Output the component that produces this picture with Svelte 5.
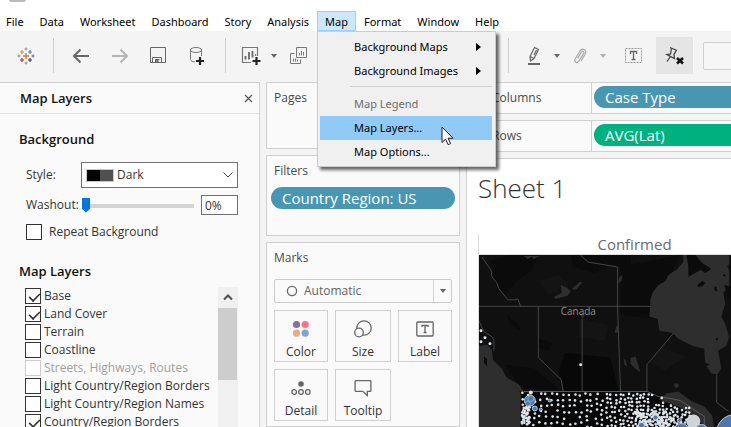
<script>
  const menusBefore = ['File', 'Data', 'Worksheet', 'Dashboard', 'Story', 'Analysis'];
  const menusAfter = ['Format', 'Window', 'Help'];

  let style = $state('Dark');
  let washout = $state(0);
  let mark = $state('Automatic');
  let repeat = $state(false);
  let layers = $state([
    { name: 'Base', on: true },
    { name: 'Land Cover', on: true },
    { name: 'Terrain', on: false },
    { name: 'Coastline', on: false },
    { name: 'Streets, Highways, Routes', on: false, disabled: true },
    { name: 'Light Country/Region Borders', on: false },
    { name: 'Light Country/Region Names', on: false },
    { name: 'Country/Region Borders', on: true }
  ]);

  // Seeded generator so the county marks keep their places between renders.
  let seed = 11;
  function rnd() {
    seed = (seed * 16807) % 2147483647;
    return seed / 2147483647;
  }

  // Lower edge of the northern border: flat, then falling along the lakes.
  function northEdge(x) {
    if (x < 172) return 139;
    return 139 + (x - 172) * 0.36;
  }

  function countyMarks() {
    const out = [];
    let x = 44;
    while (x < 214) {
      const t = Math.max(0, (x - 95) / 60);
      const step = Math.max(3.8, 5.8 - t * 2);
      for (let y = northEdge(x) + rnd() * 2; y < 176; y += step) {
        if (x < 130 && rnd() < 0.12) continue;
        if (x > 172 && y < 152 && rnd() < 0.6) continue;
        out.push({ x: x + (rnd() - 0.5) * 2.4, y: y + (rnd() - 0.5) * 1.6 });
      }
      x += step;
    }
    for (let i = 0; i < 34; i++) out.push({ x: 43 + rnd() * 9, y: 152 + rnd() * 20 });
    for (let i = 0; i < 110; i++) out.push({ x: 155 + rnd() * 42, y: 156 + rnd() * 20 });
    return out;
  }
  const marks = countyMarks();

  const logo = [
    [9, 9, 3, '#e8762d', 1.3], [5, 5, 2, '#eb912c', 1.2], [13, 5, 2, '#59879b', 1.2],
    [5, 13, 2, '#c72035', 1.2], [13, 13, 2, '#1f447e', 1.2], [9, 2, 1.5, '#7199a6', 1],
    [9, 16, 1.5, '#7199a6', 1], [2, 9, 1.5, '#7199a6', 1], [16, 9, 1.5, '#5b6591', 1]
  ];
</script>

<div class="app">
  <div class="titlebar"><span></span></div>
  <nav class="menubar">
    {#each menusBefore as m}<button class="menu">{m}</button>{/each}
    <div class="open">
      <button class="menu active">Map</button>
      <div class="dropdown" role="menu">
        <button role="menuitem">Background Maps <i class="sub"></i></button>
        <button role="menuitem">Background Images <i class="sub"></i></button>
        <hr />
        <button role="menuitem" disabled>Map Legend</button>
        <button role="menuitem" class="hover">Map Layers...</button>
        <button role="menuitem">Map Options...</button>
        <svg class="cursor" width="13" height="20" viewBox="0 0 13 20"><path d="M1 1v15.500l3.600-3.400 2.600 5.600 2.400-1.100-2.500-5.400h4.900z" fill="#fff" stroke="#1a1a2a" stroke-width="1" /></svg>
      </div>
    </div>
    {#each menusAfter as m}<button class="menu">{m}</button>{/each}
  </nav>

  <div class="toolbar">
    <button class="tool" aria-label="Start page">
      <svg width="18" height="18" viewBox="0 0 18 18">
        {#each logo as [x, y, r, c, w]}<path d="M{x - r} {y}h{r * 2}M{x} {y - r}v{r * 2}" stroke={c} stroke-width={w} />{/each}
      </svg>
    </button>
    <i class="rule"></i>
    <button class="tool" aria-label="Undo"><svg width="18" height="16" viewBox="0 0 18 16"><path d="M17 8H2M8.500 1.500L2 8l6.500 6.500" fill="none" stroke="#666" stroke-width="2" /></svg></button>
    <button class="tool" aria-label="Redo"><svg width="18" height="16" viewBox="0 0 18 16"><path d="M1 8h15M9.500 1.500L16 8l-6.500 6.500" fill="none" stroke="#b4b4b4" stroke-width="2" /></svg></button>
    <button class="tool" aria-label="Save"><svg width="17" height="17" viewBox="0 0 17 17" fill="none" stroke="#666"><path d="M.5.5h15v15H.5zM2.500 15.500v-5h9v5M5.500 15.500v-3h4" /><path d="M5.500 12.500h2.500v3H5.500z" fill="#777" /></svg></button>
    <button class="tool" aria-label="New data source"><svg width="18" height="20" viewBox="0 0 18 20" fill="none" stroke="#777"><ellipse cx="7" cy="4" rx="5.500" ry="2.500" /><path d="M1.500 4v9.500c0 1.300 2 2.300 4.500 2.500M12.500 4v6" /><path d="M11 11v8M7 15h8" stroke="#222" stroke-width="2.200" /></svg></button>
    <i class="rule"></i>
    <button class="tool narrow" aria-label="New worksheet"><svg width="20" height="20" viewBox="0 0 20 20" fill="none" stroke="#777"><path d="M10 16.500H1.500v-15h15V10M14.500 10V8" stroke-width="1.200" /><path d="M8 13.500V6M11.500 11.500V5M4.500 13.500V10" stroke="#666" stroke-width="1.800" /><path d="M15.500 11v8M11.500 15h8" stroke="#222" stroke-width="2.200" /></svg></button>
    <button class="caret" aria-label="Worksheet options"></button>
    <button class="tool" aria-label="Duplicate"><svg width="18" height="18" viewBox="0 0 18 18" fill="none" stroke="#777"><path d="M6.500.5h10v10h-10zM4.500 6.500h-4v10h10v-4M9.500 8.500V6M11.500 8.500V4M13.500 8.500V5M3.500 14.500v-3M5.500 14.500v-3M7.500 14.500v-2" /></svg></button>
    <div class="right-tools">
      <i class="rule"></i>
      <button class="tool narrow" aria-label="Highlight"><svg width="15" height="20" viewBox="0 0 15 20" fill="none" stroke="#666"><path d="M3 10.500L7.500 1.500l4 2L7 12.500l-3.500 2.500zM3 10.500l4 2M7 9l2.500-5" stroke-width="1.200" /><path d="M1 18h12" stroke-width="2" /></svg></button>
      <button class="caret" aria-label="Highlight options"></button>
      <button class="tool narrow" aria-label="Group"><svg width="15" height="18" viewBox="0 0 15 18" fill="none" stroke="#a8a8a8" stroke-width="1.200"><path d="M4.500 11.500l4-6.500c1-1.600 3.100-.4 2.200 1.200L6 14c-1.800 2.900-5.500.8-3.800-2L7 4C9.300.2 14.500 3 12.200 7L8 14" /></svg></button>
      <button class="caret pale" aria-label="Group options"></button>
      <button class="tool label-tool" aria-label="Show mark labels"><svg width="18" height="16" viewBox="0 0 18 16" fill="none"><path d="M.5.5h16v14H.5z" stroke="#999" stroke-dasharray="2 1" /><path d="M5.500 6V3.500h6V6M8.500 3.500v8M6.500 11.500h4" stroke="#666" stroke-width="1.300" /></svg></button>
      <button class="tool pin" aria-label="Fix map"><svg width="20" height="20" viewBox="0 0 20 20" fill="none"><path d="M5 1.500l7 3M6.500 2L5.500 8 2 8.500l7.500 4L9 8.500l2.500-4.500M5.500 10.500L2 15.500" stroke="#444" stroke-width="1.300" /><path d="M12 12l6 5.500M18 12l-6 5.500" stroke="#111" stroke-width="2.500" /></svg></button>
      <input class="fit" aria-label="Fit" />
    </div>
  </div>

  <div class="workspace">
    <aside class="pane">
      <header><h2>Map Layers</h2><button class="close" aria-label="Close"><svg width="9" height="9" viewBox="0 0 9 9"><path d="M1 1l7 7M8 1L1 8" stroke="#555" stroke-width="1.200" /></svg></button></header>
      <h3>Background</h3>
      <div class="form">
        <div class="row style-row">
          <label for="style">Style:</label>
          <div class="style-box">
            <svg class="swatch" width="28" height="13" viewBox="0 0 28 13"><path d="M0 0h28v13H0z" fill="#c8c8c8" /><path d="M1 1h13v11H1z" fill="#050505" /><path d="M14 1h13v11H14z" fill="#505050" /></svg>
            <select id="style" bind:value={style}><option>Dark</option><option>Light</option><option>Normal</option></select>
            <svg class="chev" width="10" height="6" viewBox="0 0 10 6"><path d="M.5.500L5 5 9.500.500" fill="none" stroke="#444" /></svg>
          </div>
        </div>
        <div class="row washout">
          <label for="washout">Washout:</label>
          <input id="washout" type="range" min="0" max="100" bind:value={washout} />
          <input class="percent" aria-label="Washout percent" value="{washout}%" />
        </div>
        <label class="check repeat"><input type="checkbox" bind:checked={repeat} />Repeat Background</label>
      </div>
      <h3 class="second">Map Layers</h3>
      <div class="layers">
        <div class="list">
          {#each layers as l}
            <label class="check" class:off={l.disabled}><input type="checkbox" bind:checked={l.on} disabled={l.disabled} />{l.name}</label>
          {/each}
        </div>
        <div class="scroll">
          <svg width="10" height="7" viewBox="0 0 10 7"><path d="M1 5.500l4-4 4 4" fill="none" stroke="#505050" stroke-width="2" /></svg>
          <div></div>
        </div>
      </div>
    </aside>

    <div class="cards">
      <section class="card pages"><h4>Pages</h4></section>
      <section class="card filters"><h4>Filters</h4><div class="pill">Country Region: US</div></section>
      <section class="card marks">
        <h4>Marks</h4>
        <div class="mark-type">
          <svg width="12" height="12" viewBox="0 0 12 12"><circle cx="6" cy="6" r="4.600" fill="none" stroke="#666" stroke-width="1.300" /></svg>
          <select aria-label="Mark type" bind:value={mark}><option>Automatic</option><option>Circle</option><option>Map</option></select>
          <span><i class="tri"></i></span>
        </div>
        <div class="grid">
          <button><svg width="18" height="18" viewBox="0 0 18 18"><circle cx="4.500" cy="4.500" r="3.600" fill="#85709b" /><circle cx="13.200" cy="4.500" r="3.600" fill="#fc7183" /><circle cx="4.500" cy="13.200" r="3.600" fill="#f3a77e" /><circle cx="13.200" cy="13.200" r="3.600" fill="#7ea6d0" /></svg>Color</button>
          <button><svg width="18" height="18" viewBox="0 0 18 18" fill="#fafafa" stroke="#666" stroke-width="1.300"><circle cx="10" cy="8" r="7.200" /><circle cx="5" cy="12.500" r="4.300" /></svg>Size</button>
          <button><svg width="18" height="18" viewBox="0 0 18 18" fill="none" stroke="#666" stroke-width="1.300"><rect x=".8" y="2" width="16.400" height="14" rx="1" /><path d="M6 7V5.500h6V7M9 5.500v7M7.500 12.500h3" /></svg>Label</button>
          <button><svg width="20" height="18" viewBox="0 0 20 18" fill="none" stroke="#666" stroke-width="1.300"><circle cx="10" cy="5" r="2.800" fill="#666" stroke="none" /><circle cx="3.200" cy="13" r="2.300" /><circle cx="10" cy="13" r="2.300" /><circle cx="16.800" cy="13" r="2.300" /></svg>Detail</button>
          <button><svg width="18" height="18" viewBox="0 0 18 18" fill="none" stroke="#666" stroke-width="1.300"><path d="M1.700 1.700h14.600q.6 0 .6.600v9.400q0 .6-.6.600h-3V16.500l-4.600-4.200h-7q-.6 0-.6-.6V2.300q0-.6.600-.6z" /></svg>Tooltip</button>
        </div>
      </section>
    </div>

    <main>
      <div class="shelf"><span>Columns</span><div class="drop"><div class="pill">Case Type</div></div></div>
      <div class="shelf"><span>Rows</span><div class="drop"><div class="pill green">AVG(Lat)</div></div></div>
      <div class="sheet">
        <h1>Sheet 1</h1>
        <div class="view">
          <div class="col-head">Confirmed</div>
          <svg class="map" viewBox="0 0 312 212">
            <rect width="312" height="212" fill="#101010" />
            <g fill="#0b0b0b">
              <path d="M12 6l18-6h30l-8 16-14 10-12 14-10-14z" /><path d="M92 0h60v14l-20-4-16 8-22-6z" /><path d="M142 12l60-12-16 34-10 30-34-4z" />
              <path d="M28 60l12 10 2 6-12-8zM60 84l14 4-4 8-12-3z" /><path d="M26 110l30 4 26 22-40-2z" />
            </g>
            <path d="M86 98l46 5 8 34H86l-6-20z" fill="#080808" />
            <path d="M41 137h130l14 4 20 10 14 20v6H41z" fill="#080808" />
            <g fill="#141414"><path d="M60 26l20-6 10 12-20 8zM100 64l30 6-4 16-26-4zM182 92l26 10-22 14-14-8z" /></g>
            <g fill="#2e2e2e">
              <path d="M205 0v7l-6 7-9 6-3 6-7 4-6 8-2 7-1 17 8 2 2 12 13 2 6 6 14 7 12 3 1 15 6 10 6 1 4-6-3-18 8-5 3-9-4-13-4-7 4-13-2-12 6-3V0z" />
              <path d="M75 42l8-4-1-8 5 2 5 4-3 5-12 3zM94 33l7-6 3 0-6 7-4 1zM139 28l2-6 3-2-1 6zM45 1h16l-6 3-2-2-4 2zM136 78l2-7 2-1-1 8z" />
              <path d="M0 91l8-1 5 5 1 10 9 9 4 8 10 10 5 7-1 75H0z" />
              <path d="M28 123l12 7 5 7-4 0-10-9z" />
              <path d="M152 103l5-1 5 16-5-4-5-5zM145 104l2 1 2 7-3-2z" /><path d="M180 145l8-6 12-2 12 9 14 6 8 9 2 14-8 2-8-14-18-10z" /><path d="M101 60l6-2-3 6z" /><circle cx="198" cy="131" r="2.300" />
            </g>
            <g fill="#0b0b0b"><path d="M208 0l2 11v11l5-3 7-4 5 3 6-4-9-6-7-8zM219 30l5-4 3 2-3 3-4 1zM236 33l2-2 1 5-2 0zM244 20l3-1v3zM249 11l4-2v10zM237 84l3-1-1 3zM246 30l7 2v12l-4-3zM227 108l5 2-5 1zM5 102l3 2 0 8-3-4z" /></g>
            <g fill="none" stroke="#444">
              <path d="M3 2l6 9 3 4 1 7 5 6 2 6 9 11 7 0 3-1 3 8" /><path d="M0 51.500h172M59.500 52v51l23 22 2 12M103.500 64v73M102 0l7 7 30 5V52l3 85M168.500 137v-27l27-32M238.500 120v28l12 9" /><path d="M0 66l5 11 8 5 2 4v10" /><path d="M45 137h124l11 5 12 2 10 2 12 8 12 8v12" stroke="#5c5c5c" />
            </g>
            <text x="82" y="60" fill="#8e8e8e">Canada</text>
            <g fill="#dfe4ea">
              {#each marks as m}<circle cx={m.x} cy={m.y} r="1.300" />{/each}
              <circle cx="2" cy="76" r="1.500" /><circle cx="6" cy="83" r="1.500" /><circle cx="2" cy="87" r="1.500" /><circle cx="11" cy="89" r="1.500" /><circle cx="102" cy="110" r="1.500" /><circle cx="52" cy="138" r="2" /><circle cx="215" cy="167" r="7" fill="#cfd4da" />
            </g>
            <g fill="#4e79a7" stroke="#dfe6ee" stroke-width=".800">
              <circle cx="51" cy="146" r="5.500" /><circle cx="52" cy="144" r="3" stroke="#9db8d3" /><circle cx="49" cy="149" r="2.500" stroke="#9db8d3" /><circle cx="56" cy="154" r="2.500" /><circle cx="62" cy="155" r="1.500" /><circle cx="71" cy="146" r="1.500" />
              <circle cx="177" cy="163" r="2.500" /><circle cx="163" cy="171" r="3" /><circle cx="201" cy="166" r="2" /><circle cx="203" cy="177" r="8" /><circle cx="223" cy="177" r="7" /><circle cx="257" cy="179" r="19" />
            </g>
          </svg>
        </div>
      </div>
    </main>
  </div>
</div>

<style>
  :global(body) { background: #fff; }
  .app {
    display: flex; flex-direction: column; height: 100vh; overflow: hidden;
    font-family: "Open Sans", "Noto Sans", sans-serif; font-size: 12px; line-height: 18px; color: #333;
  }
  .app :global(*) { box-sizing: border-box; }
  button, input, select { font: inherit; color: inherit; margin: 0; border: 0; padding: 0; background: none; border-radius: 0; }
  h1, h2, h3, h4 { margin: 0; }
  i { display: block; }

  .titlebar { height: 11px; flex: none; padding-left: 9px; }
  .titlebar span { display: block; width: 17px; height: 2px; background: #bbb; border-radius: 0 0 2px 2px; }
  .menubar { display: flex; flex: none; height: 20px; margin-left: -2px; color: #000; position: relative; z-index: 2; font-family: "Noto Sans", sans-serif; font-size: 11px; }
  .menu { padding: 0 8px; height: 20px; line-height: 22px; white-space: nowrap; }
  .open { position: relative; }
  .active { background: #cce8ff; box-shadow: inset 0 0 0 1px #99d1ff; }
  .dropdown {
    position: absolute; left: 0; top: 20px; width: 179px; padding: 3px 3px 2px 2px;
    background: #f0f0f0; border: 1px solid #ccc; box-shadow: 3px 3px 3px rgba(0, 0, 0, .6);
  }
  .dropdown button { display: flex; align-items: center; justify-content: space-between; width: 100%; height: 24px; padding: 0 11px 0 34px; color: #000; white-space: nowrap; }
  .dropdown button:disabled { color: #6d6d6d; }
  .dropdown .hover { background: #91c9f7; }
  .dropdown hr { height: 1px; margin: 3px 0 5px 30px; border: 0; background: #d0d0d0; }
  .sub { border: 4px solid transparent; border-left: 5px solid #000; border-right: 0; }
  .cursor { position: absolute; left: 123px; top: 94px; }

  .toolbar { display: flex; align-items: center; flex: none; height: 51px; padding: 0 0 2px 6px; background: #f4f4f4; }
  .tool { display: flex; align-items: center; justify-content: center; flex: none; width: 39px; height: 37px; }
  .narrow { width: 36px; }
  .rule { flex: none; width: 1px; height: 35px; margin: 0 7px 0 8px; background: #cfcfcf; }
  .caret { flex: none; width: 10px; height: 20px; display: flex; align-items: center; justify-content: center; }
  .caret::after, .tri { content: ""; border: 3px solid transparent; border-top: 4px solid #666; border-bottom: 0; }
  .pale::after { border-top-color: #b0b0b0; }
  .right-tools { display: flex; align-items: center; flex: 1; margin-left: 182px; min-width: 0; }
  .label-tool { margin: 0 3px 0 6px; }
  .pin { width: 37px; background: #e5e5e5; }
  .fit { flex: 1; min-width: 40px; height: 28px; margin: 0 -40px 0 10px; border: 1px solid #d0d0d0; border-radius: 2px; background: #f6f6f6; }

  .workspace { display: flex; flex: 1; min-height: 0; background: #f4f4f4; }
  .pane { flex: none; width: 260px; background: #fafafa; border: solid #d0d0d0; border-width: 1px 1px 0 0; overflow: hidden; }
  .pane header { display: flex; align-items: center; justify-content: space-between; height: 31px; padding: 0 6px 0 20px; border-bottom: 1px solid #e2e2e2; }
  h2, h3 { font-size: 13px; font-weight: 600; line-height: 18px; color: #111; }
  .close { display: flex; }
  h3 { padding: 16px 0 0 19px; }
  h3.second { padding-top: 21px; }
  .form { padding: 14px 21px 0 26px; }
  .row { display: flex; align-items: center; }
  .style-row { justify-content: space-between; }
  .style-box { position: relative; width: 157px; }
  .style-box select { width: 100%; height: 26px; padding-left: 35px; appearance: none; border: 1px solid #707070; background: #fff; }
  .swatch { position: absolute; left: 5px; top: 7px; }
  .chev { position: absolute; right: 5px; top: 10px; }
  .washout { height: 20px; margin-top: 7px; }
  .washout label { width: 56px; }
  input[type="range"] { appearance: none; width: 112px; height: 15px; margin-right: 7px; background: linear-gradient(#d4d4d4, #d4d4d4) 0 6px / 100% 4px no-repeat; }
  input[type="range"]::-webkit-slider-thumb { appearance: none; width: 8px; height: 15px; background: #0078d7; clip-path: polygon(0 0, 100% 0, 100% 75%, 50% 100%, 0 75%); }
  .percent { flex: 1; min-width: 0; height: 20px; padding-left: 3px; border: 1px solid #707070; background: #fff; }
  .check { display: flex; align-items: center; gap: 3px; height: 18px; white-space: nowrap; }
  .repeat { gap: 7px; margin-top: 8px; }
  .check input { appearance: none; flex: none; width: 16px; height: 16px; border: 1px solid #333; background: #fff; }
  .check input:checked::after { content: ""; display: block; width: 11px; height: 6px; margin: 3px 0 0 2px; border: solid #333; border-width: 0 0 2px 2px; transform: rotate(-45deg) scale(.8); }
  .off { color: #a0a0a0; }
  .check.off input { border-color: #ccc; }
  .layers { display: flex; justify-content: space-between; padding: 7px 21px 0 25px; }
  .scroll { width: 20px; padding-top: 7px; background: #f0f0f0; }
  .scroll svg { display: block; margin: 0 auto; }
  .scroll div { width: 19px; height: 72px; margin-top: 7px; background: #cdcdcd; }

  .cards { display: flex; flex-direction: column; gap: 6px; flex: none; width: 194px; margin: 0 6px; }
  .card { flex: none; padding: 6px 7px 0; background: #fafafa; border: 1px solid #d0d0d0; }
  h4 { font-size: 12px; font-weight: 400; line-height: 18px; color: #4a4a4a; }
  .pages { height: 67px; }
  .filters { height: 81px; padding-right: 4px; }
  .card.marks { flex: 1; }
  .pill { height: 22px; padding-left: 11px; border-radius: 11px; background: #4996b2; color: #fff; font-size: 15px; line-height: 22px; white-space: nowrap; }
  .cards .pill { margin: 7px 0 0 -3px; }
  .green { background: #00b180; }
  .mark-type { display: flex; align-items: center; height: 24px; margin-top: 12px; padding-left: 11px; border: 1px solid #ccc; border-radius: 2px; }
  .mark-type select { flex: 1; appearance: none; padding-left: 6px; color: #666; }
  .mark-type span { display: flex; align-items: center; justify-content: center; width: 18px; height: 22px; border-left: 1px solid #d4d4d4; }
  .grid { display: grid; grid-template-columns: 54fr 56fr 54fr; gap: 7px; margin-top: 7px; }
  .grid button { display: flex; flex-direction: column; align-items: center; justify-content: space-between; height: 52px; padding: 9px 0 0; border: 1px solid #d0d0d0; }
  .grid svg { flex: none; }

  main { display: flex; flex-direction: column; gap: 6px; flex: 1; min-width: 0; }
  .shelf { display: flex; flex: none; height: 32px; background: #fafafa; border: 1px solid #d0d0d0; border-right: 0; line-height: 30px; color: #4a4a4a; }
  .shelf span { width: 124px; padding-left: 25px; }
  .drop { flex: 1; padding: 3px 0 0 2px; border-left: 1px solid #d0d0d0; }
  .drop .pill { border-radius: 11px 0 0 11px; }
  .sheet { flex: 1; min-height: 0; overflow: hidden; padding-left: 11px; background: #fff; border: solid #d0d0d0; border-width: 1px 0 0 1px; }
  h1 { padding-top: 11px; font-size: 26px; line-height: 36px; font-weight: 300; color: #333; }
  .view { min-width: 312px; margin-top: 28px; border-left: 1px solid #ddd; }
  .col-head { height: 21px; border-bottom: 1px solid #ddd; font-size: 15px; line-height: 20px; text-align: center; color: #6b6b6b; }
  .map { display: block; width: 100%; }
  .map text { font-size: 10px; }
</style>
